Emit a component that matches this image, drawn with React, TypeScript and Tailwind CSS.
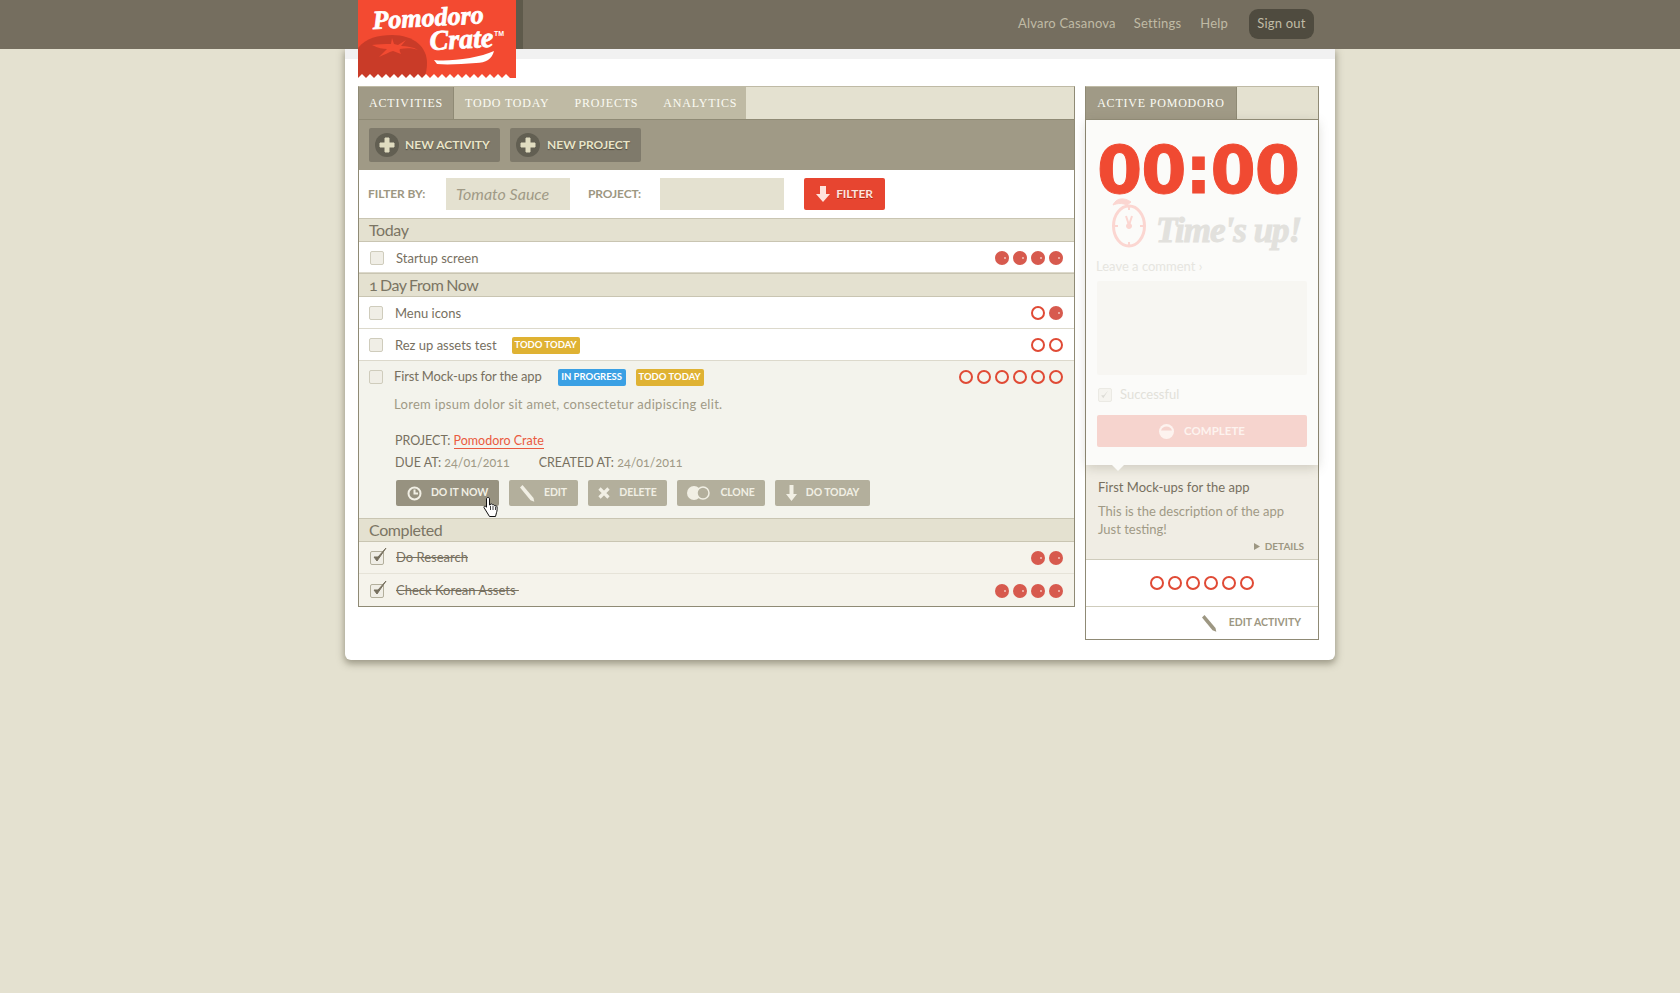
import { ReactNode } from 'react';

function Plus() {
  return (
    <span className="w-6 h-6 rounded-full bg-[#625f52] flex items-center justify-center shrink-0">
      <svg width="16" height="16" viewBox="0 0 16 16">
        <path d="M6 1h4v5h5v4h-5v5H6v-5H1V6h5z" fill="#e0dcc0" stroke="#e0dcc0" strokeLinejoin="round" />
      </svg>
    </span>
  );
}

function Dots({ done, total }: { done: number; total: number }) {
  // hollow circles come first, finished ones stack up on the right
  const items = Array.from({ length: total }, (_, i) => i >= total - done);
  return (
    <div className="flex gap-[4px]">
      {items.map((filled, i) =>
        filled ? (
          <span key={i} className="w-[14px] h-[14px] rounded-full bg-[#d75a4e] flex items-center justify-end pr-[3px]">
            <span className="w-[2px] h-[2px] rounded-full bg-[#f3c4bc]" />
          </span>
        ) : (
          <span key={i} className="w-[14px] h-[14px] rounded-full border-2 border-[#e04a35]" />
        ),
      )}
    </div>
  );
}

function Check({ checked }: { checked?: boolean }) {
  return (
    <span className={`relative w-[14px] h-[14px] rounded-[2px] border bg-[#f0eee6] shrink-0 ${checked ? 'border-[#b3af9c]' : 'border-[#cfccbc]'}`}>
      {checked && (
        <svg className="absolute -top-[5px] left-0" width="18" height="18" viewBox="0 0 18 18">
          <path d="M3 10l3 4 9-13-8 9z" fill="#77705f" stroke="#77705f" strokeWidth="1" strokeLinejoin="round" />
        </svg>
      )}
    </span>
  );
}

function Tag({ color, children }: { color: string; children: ReactNode }) {
  return (
    <span className={`h-[17px] w-[68px] rounded-[2px] flex items-center justify-center text-white text-[9.500px] font-bold whitespace-nowrap ${color}`}>
      {children}
    </span>
  );
}

function Section({ children }: { children: ReactNode }) {
  return (
    <div className="h-[24px] shrink-0 bg-[#e4e1d0] border-y border-[#c9c5b2] flex items-center pl-[10px] text-[16px] tracking-[-0.4px] [word-spacing:-1px] text-[#7b7564] oldstyle-nums">
      {children}
    </div>
  );
}

function Row({ label, done, total, tags, pl = 'pl-[11px]', pt = 'pt-[1px]', h = 'h-[31px]' }: { label: string; done: number; total: number; tags?: ReactNode; pl?: string; pt?: string; h?: string }) {
  return (
    <div className={`${h} shrink-0 flex items-center ${pl} ${pt} pr-[11px] border-b border-[#dcd9cc] bg-white`}>
      <Check />
      <span className="ml-[12px] pt-[1px] text-[13px] text-[#77705f] whitespace-nowrap">{label}</span>
      {tags && <div className="flex ml-[15px] gap-[10px]">{tags}</div>}
      <div className="ml-auto">
        <Dots done={done} total={total} />
      </div>
    </div>
  );
}

function DoneRow({ label, done }: { label: string; done: number }) {
  return (
    <div className="h-[32px] shrink-0 flex items-center pl-[11px] pr-[11px] pt-[1px] border-b border-[#e6e3d8] last:border-b-0 bg-[#f5f3eb]">
      <Check checked />
      <span className="ml-[12px] text-[13px] text-[#77705f] line-through whitespace-pre">{label}</span>
      <div className="ml-auto">
        <Dots done={done} total={done} />
      </div>
    </div>
  );
}

function ActionBtn({ w, icon, active, children }: { w: string; icon: ReactNode; active?: boolean; children: ReactNode }) {
  return (
    <div className={`${w} h-[26px] rounded-[2px] flex items-center justify-center gap-[9px] text-[10.500px] font-bold tracking-[-0.1px] text-[#f1efe4] whitespace-nowrap ${active ? 'bg-[#979280]' : 'bg-[#b3af9c]'}`}>
      {icon}
      {children}
    </div>
  );
}

function PencilIcon({ color = '#f1efe4' }: { color?: string }) {
  return (
    <svg width="15" height="17" viewBox="0 0 15 17">
      <path d="M0 2.500L2.500 0l11 13 .8 3.800-3.800-1.500z" fill={color} />
    </svg>
  );
}

function TimesUpClock() {
  return (
    <svg width="36" height="50" viewBox="0 0 36 50" fill="none" stroke="#fbd6d1">
      <path d="M2 7C5 0 13-1 20 4l-4 3C11 5 7 5 2 7z" fill="#fbd6d1" />
      <ellipse cx="18" cy="28" rx="15.500" ry="20" strokeWidth="3" />
      <path d="M15 18l3 9 3-9M18 8v4M18 44v4M3 28h4M29 28h4" strokeWidth="2" />
      <circle cx="18" cy="28" r="2.500" fill="#fbd6d1" />
    </svg>
  );
}

function Logo() {
  return (
    <div className="absolute z-20 top-0 left-[358px] w-[158px] h-[78px] bg-[#f34a31] overflow-hidden">
      <svg width="158" height="78" viewBox="0 0 158 78" className="absolute inset-0">
        <path d="M0 48C8 38 20 35 34 35c22 0 35 12 35 28 0 6-1 11-3 15H0z" fill="#c93b28" />
        <path d="M14 45c6 3 11 4 15 4l-8 8c5-2 10-5 14-6l8 3c-1-2-2-4-1-5 6-1 13-1 18 1-5-3-11-4-17-4l5-6-8 5-4-1-2-6-1 6c-6 0-13 0-19 1z" fill="#f34a31" />
        <path d="M0 78l4-4 4 4 4-4 4 4 4-4 4 4 4-4 4 4 4-4 4 4 4-4 4 4 4-4 4 4 4-4 4 4 4-4 4 4 4-4 4 4 4-4 4 4 4-4 4 4 4-4 4 4 4-4 4 4 4-4 4 4 4-4 4 4 4-4 4 4 4-4 4 4 4-4 4 4z" fill="#fff" />
        <path d="M76 60c15 2 45-2 60-9-2 8-8 12-18 12-14 1-28 2-39 1z" fill="#fff" />
        <text x="15" y="29" transform="rotate(-3 15 29)" fontFamily="'Liberation Serif',serif" fontStyle="italic" fontWeight="700" fontSize="26" fill="#fff" stroke="#fff" strokeWidth="0.8">Pomodoro</text>
        <text x="72" y="50" transform="rotate(-3 72 50)" fontFamily="'Liberation Serif',serif" fontStyle="italic" fontWeight="700" fontSize="28" fill="#fff" stroke="#fff" strokeWidth="0.8">Crate</text>
        <text x="136" y="36" fontFamily="'Liberation Sans',sans-serif" fontWeight="700" fontSize="7" fill="#fff">TM</text>
      </svg>
    </div>
  );
}

export default function App() {
  return (
    <div className="relative min-h-[993px] bg-[#e4e1d0] font-['Lato','Noto_Sans',sans-serif] oldstyle-nums">
      <div className="h-[49px] bg-[#756e5f] relative z-10 flex items-center justify-end pr-[366px] pb-[1px] text-[13px] text-[#c0bba5] tracking-[0.2px]">
        <div className="absolute left-[516px] top-0 w-[7px] h-[49px] bg-[#5e5a4b]" />
        <span>Alvaro Casanova</span>
        <span className="ml-[18px]">Settings</span>
        <span className="ml-[19px]">Help</span>
        <span className="ml-[21px] w-[65px] h-[30px] rounded-[9px] bg-[#4f4b3f] flex items-center justify-center">Sign out</span>
      </div>
      <Logo />

      <div className="w-[990px] h-[611px] mx-auto bg-white rounded-b-[6px] shadow-[0_3px_7px_1px_rgba(90,85,65,0.5)]">
        <div className="h-[10px] bg-[#f1f1f1]" />
        <div className="flex gap-[10px] pl-[13px] pt-[27px]">
          <div className="w-[717px] h-[521px] border border-[#8f8a75] border-t-[#bfbaa5] flex flex-col">
            <div className="h-[32px] shrink-0 bg-[#e4e1d0] flex font-['Liberation_Serif',serif] text-[12px] tracking-[0.8px] text-[#fbfaf3] whitespace-nowrap">
              <div className="w-[95px] bg-[#a09a86] flex items-center justify-center border-r border-[#8f8a75]">ACTIVITIES</div>
              <div className="w-[292px] bg-[#bfbaa4] flex items-center">
                <span className="ml-[11px]">TODO TODAY</span>
                <span className="ml-[25px]">PROJECTS</span>
                <span className="ml-[25px]">ANALYTICS</span>
              </div>
            </div>
            <div className="h-[51px] shrink-0 bg-[#a09a86] border-t border-[#8f8a75] flex items-center pl-[10px] gap-[10px] text-[12px] font-bold text-[#e8e4c8] [text-shadow:0_1px_1px_#4f4b3f]">
              <div className="w-[131px] h-[34px] bg-[#7f7a6b] rounded-[2px] flex items-center pl-[6px] gap-[6px] whitespace-nowrap"><Plus />NEW ACTIVITY</div>
              <div className="w-[131px] h-[34px] bg-[#7f7a6b] rounded-[2px] flex items-center pl-[6px] gap-[7px] whitespace-nowrap"><Plus />NEW PROJECT</div>
            </div>
            <div className="h-[48px] shrink-0 flex items-center pl-[9px] text-[12px] font-bold tracking-[-0.1px] text-[#9d9782] bg-white">
              <span className="w-[78px]">FILTER BY:</span>
              <div className="w-[124px] h-[32px] bg-[#e4e1d0] flex items-center pl-[10px] italic font-normal tracking-normal text-[16px] text-[#a09a86]">Tomato Sauce</div>
              <span className="w-[72px] ml-[18px]">PROJECT:</span>
              <div className="w-[124px] h-[32px] bg-[#e4e1d0]" />
              <div className="ml-[20px] w-[81px] h-[32px] bg-[#e74530] rounded-[2px] flex items-center justify-center gap-[6px] text-[#ffe3dd] [text-shadow:0_1px_0_#a82a1a]">
                <svg width="14" height="16" viewBox="0 0 14 16"><path d="M4 0h6v8h4l-7 8-7-8h4z" fill="#ffe3dd" /></svg>
                FILTER
              </div>
            </div>

            <Section>Today</Section>
            <Row label="Startup screen" done={4} total={4} pt="pt-[2px]" />
            <Section>1 Day From Now</Section>
            <Row label="Menu icons" done={1} total={2} h="h-[32px]" pl="pl-[10px]" />
            <Row label="Rez up assets test" done={0} total={2} h="h-[32px]" pl="pl-[10px]" tags={<Tag color="bg-[#dfb233]">TODO TODAY</Tag>} />

            <div className="h-[157px] shrink-0 bg-[#f3f3ec] pl-[10px] pr-[11px] pt-[7px] text-[13px] text-[#77705f]">
              <div className="flex items-center h-[18px]">
                <Check />
                <span className="ml-[11px] tracking-[-0.15px] whitespace-nowrap">First Mock-ups for the app</span>
                <div className="flex ml-[16px] gap-[10px]">
                  <Tag color="bg-[#3aa0e4]">IN PROGRESS</Tag>
                  <Tag color="bg-[#dfb233]">TODO TODAY</Tag>
                </div>
                <div className="ml-auto"><Dots done={0} total={6} /></div>
              </div>
              <div className="pl-[25px]">
                <p className="mt-[9px] h-[18px] text-[#a09a86] tracking-[0.3px]">Lorem ipsum dolor sit amet, consectetur adipiscing elit.</p>
                <p className="mt-[19px] h-[18px] pl-[1px] text-[12.500px]">PROJECT: <span className="text-[#ea5a40] border-b border-[#ea5a40]">Pomodoro Crate</span></p>
                <p className="mt-[4px] h-[18px] pl-[1px] text-[12.500px] flex">
                  <span>DUE AT: <span className="text-[#a09a86]">24/01/2011</span></span>
                  <span className="ml-[29px]">CREATED AT: <span className="text-[#a09a86]">24/01/2011</span></span>
                </p>
                <div className="relative mt-[8px] ml-[2px] flex gap-[10px]">
                  <ActionBtn w="w-[103px]" active icon={
                    <svg width="15" height="15" viewBox="0 0 15 15" fill="none" stroke="#f1efe4" strokeWidth="2"><circle cx="7.500" cy="7.500" r="6" /><path d="M7.500 3.500v4h3.500" /></svg>
                  }>DO IT NOW</ActionBtn>
                  <ActionBtn w="w-[69px]" icon={<PencilIcon />}>EDIT</ActionBtn>
                  <ActionBtn w="w-[79px]" icon={
                    <svg width="12" height="12" viewBox="0 0 12 12" fill="none" stroke="#f1efe4" strokeWidth="3.200"><path d="M1.500 1.500l9 9M10.500 1.500l-9 9" /></svg>
                  }>DELETE</ActionBtn>
                  <ActionBtn w="w-[88px]" icon={
                    <svg width="24" height="14" viewBox="0 0 24 14"><circle cx="7" cy="7" r="7" fill="#f1efe4" /><circle cx="16" cy="7" r="6" fill="#b3af9c" stroke="#f1efe4" strokeWidth="1.500" /></svg>
                  }>CLONE</ActionBtn>
                  <ActionBtn w="w-[95px]" icon={
                    <svg width="11" height="16" viewBox="0 0 11 16"><path d="M3.500 0h4v9H11l-5.500 7L0 9h3.500z" fill="#f1efe4" /></svg>
                  }>DO TODAY</ActionBtn>
                  <svg className="absolute left-[87px] top-[16px]" width="18" height="22" viewBox="0 0 18 22">
                    <path d="M5 1.500c1 0 1.500.6 1.500 1.500v6l1-.3V8c.8-.4 1.800 0 2 .8.800-.4 1.800 0 2 .9 1-.4 2.300 0 2.500 1 .3 2 .2 4-.5 6l-1 3.800H6.500L2.500 14 1 11.500c-.3-1 .8-1.800 1.800-1l.7.7V3c0-1 .5-1.500 1.500-1.500z" fill="#fff" stroke="#111" strokeWidth="1" strokeLinejoin="round" />
                    <path d="M7.500 10v4M10 10v4M12.500 10.500V14" stroke="#111" strokeWidth="0.800" />
                  </svg>
                </div>
              </div>
            </div>

            <Section>Completed</Section>
            <DoneRow label="Do Research" done={2} />
            <DoneRow label="Check Korean Assets " done={4} />
          </div>

          <div className="relative w-[234px] h-[554px] border border-[#8f8a75] border-t-[#bfbaa5] flex flex-col">
            <div className="h-[32px] bg-[#e4e1d0] flex font-['Liberation_Serif',serif] text-[12px] tracking-[0.8px] text-[#fbfaf3] shrink-0">
              <div className="w-[151px] bg-[#a09a86] flex items-center justify-center border-r border-[#8f8a75]">ACTIVE POMODORO</div>
            </div>
            <div className="relative h-[346px] shrink-0 bg-[#fbfbf9] border-t border-[#8f8a75] shadow-[0_3px_10px_rgba(90,85,70,0.22)] px-[10px]">
              <div className="h-[60px] pt-[20px] box-content pl-[1px] flex items-center font-['DejaVu_Sans',sans-serif] font-bold text-[65px] leading-none tracking-[-1px] text-[#f04a32] [-webkit-text-stroke:1px_#f04a32]">00:00</div>
              <div className="flex items-start pl-[15px] -mt-[2px] h-[52px]">
                <TimesUpClock />
                <span className="ml-[9px] mt-[13px] font-['Liberation_Serif',serif] italic font-bold text-[35px] leading-[40px] tracking-[-1px] text-[#e2e1dd] [-webkit-text-stroke:1px_#e2e1dd] whitespace-nowrap">Time's up!</span>
              </div>
              <p className="mt-[7px] text-[13px] leading-[18px] text-[#e6e5e0]">Leave a comment ›</p>
              <div className="mt-[6px] w-[210px] h-[94px] ml-[1px] rounded-[2px] bg-[#f7f6f2]" />
              <div className="mt-[13px] ml-[2px] flex items-center h-[14px]">
                <span className="w-[14px] h-[14px] rounded-[2px] border border-[#ebeae4] bg-[#f5f4ef] flex items-center justify-center">
                  <svg width="14" height="14" viewBox="0 0 17 17"><path d="M3 9l3 4 7-11-6 7z" fill="#dcdbd5" /></svg>
                </span>
                <span className="ml-[8px] text-[13px] text-[#e2e1da]">Successful</span>
              </div>
              <div className="mt-[13px] ml-[1px] w-[210px] h-[32px] rounded-[2px] bg-[#f6d4ce] flex items-center justify-center gap-[10px] text-[11.500px] font-bold text-[#fdf3ef]">
                <svg width="15" height="15" viewBox="0 0 15 15"><circle cx="7.500" cy="7.500" r="7.500" fill="#fdf3ef" /><path d="M2 6.500c1-3 3-4 5.500-4s4.500 1 5.500 4z" fill="#f6d4ce" /></svg>
                COMPLETE
              </div>
              <span className="absolute left-[26px] -bottom-[6px] w-0 h-0 border-x-[6px] border-x-transparent border-t-[6px] border-t-[#fbfbf9]" />
            </div>
            <div className="h-[94px] shrink-0 bg-[#f0ede4] px-[12px] pt-[13px] text-[13px] text-[#77705f]">
              <p className="leading-[18px]">First Mock-ups for the app</p>
              <p className="mt-[6px] leading-[18px] text-[#a09a86]">This is the description of the app<br />Just testing!</p>
              <p className="flex items-center justify-end gap-[5px] pr-[2px] text-[10px] font-bold text-[#9d9782] leading-[16px]">
                <svg width="6" height="7" viewBox="0 0 6 7"><path d="M0 0l6 3.500L0 7z" fill="#9d9782" /></svg>
                DETAILS
              </p>
            </div>
            <div className="h-[48px] shrink-0 bg-white border-y border-[#cfccbc] flex items-center justify-center">
              <Dots done={0} total={6} />
            </div>
            <div className="flex-1 flex items-center justify-end pr-[17px] gap-[12px] text-[10.500px] font-bold text-[#9d9782]">
              <PencilIcon color="#9d9782" />
              EDIT ACTIVITY
            </div>
          </div>
        </div>
      </div>
    </div>
  );
}
